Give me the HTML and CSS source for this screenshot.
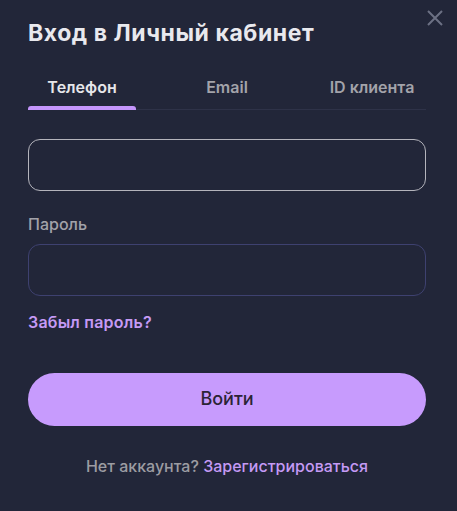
FILE: index.html
```html
<!DOCTYPE html>
<html lang="ru">
<head>
<meta charset="utf-8">
<title>Вход в Личный кабинет</title>
<link rel="stylesheet" href="styles.css">
</head>
<body>
<div class="modal">
  <button class="close" aria-label="Закрыть">
    <svg width="16" height="16" viewBox="0 0 16 16"><path d="M1 1L15 15M15 1L1 15" stroke="currentColor" stroke-width="2" fill="none"/></svg>
  </button>
  <h1 class="title">Вход в Личный кабинет</h1>
  <div class="tabs">
    <div class="tab active">Телефон</div>
    <div class="tab">Email</div>
    <div class="tab">ID клиента</div>
  </div>
  <div class="field field-focus"></div>
  <div class="label">Пароль</div>
  <div class="field field-dim"></div>
  <a class="forgot">Забыл пароль?</a>
  <button class="submit">Войти</button>
  <p class="register">Нет аккаунта? <a class="link">Зарегистрироваться</a></p>
</div>
</body>
</html>
```
FILE: styles.css
```css
* { box-sizing: border-box; }
html, body {
  margin: 0;
  background: #222639;
}
body {
  font-family: Inter, "Noto Sans", sans-serif;
  color: #e8e8ec;
  width: 457px;
  height: 511px;
  overflow: hidden;
}
.modal {
  position: relative;
  padding: 19px 31px 0 28px;
  display: flex;
  flex-direction: column;
}
.close {
  position: absolute;
  top: 10px;
  right: 14px;
  width: 16px;
  height: 16px;
  padding: 0;
  border: 0;
  background: none;
  color: #6c7084;
  display: flex;
}
.title {
  margin: 0;
  font-size: 23px;
  line-height: 28px;
  font-weight: 700;
  color: #e9e9ee;
  letter-spacing: 0.55px;
}
.tabs {
  margin-top: 30px;
  display: flex;
  justify-content: space-between;
  border-bottom: 1px solid #2e3248;
}
.tab {
  position: relative;
  width: 108px;
  text-align: center;
  font-size: 16px;
  line-height: 20px;
  font-weight: 600;
  color: #a3a3aa;
  padding-bottom: 12px;
  white-space: nowrap;
}
.tab.active { color: #e6e6ea; }
.tab.active::after {
  content: "";
  position: absolute;
  left: 0;
  right: 0;
  bottom: -1px;
  height: 4px;
  border-radius: 3px 3px 0 0;
  background: #c495fb;
}
.field {
  height: 52px;
  border-radius: 12px;
  border: 1px solid #3e4170;
}
.field-focus {
  margin-top: 29px;
  border-color: #b4b4bc;
}
.label {
  margin-top: 23px;
  font-size: 16px;
  line-height: 20px;
  font-weight: 500;
  color: #a2a2a9;
}
.field-dim { margin-top: 10px; }
.forgot {
  margin-top: 16px;
  font-size: 16px;
  line-height: 20px;
  font-weight: 600;
  color: #c59af5;
  letter-spacing: 0.2px;
}
.submit {
  margin-top: 41px;
  height: 53px;
  border: 0;
  border-radius: 27px;
  background: #c79bfd;
  color: #2b2436;
  font-family: inherit;
  font-size: 18px;
  font-weight: 500;
  padding: 0 0 3px;
}
.register {
  margin: 30px 0 0;
  text-align: center;
  font-size: 16px;
  line-height: 20px;
  font-weight: 500;
  color: #9c9ca2;
}
.link { color: #c59af5; }
```
